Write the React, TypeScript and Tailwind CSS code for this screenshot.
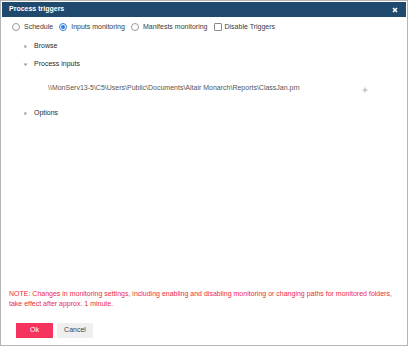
import React from 'react';

const Radio: React.FC<{ checked?: boolean; label: string }> = ({ checked, label }) => (
  <label className="flex items-center gap-[4px]">
    <span
      className={
        checked
          ? 'w-[8px] h-[8px] rounded-full border border-[#2d7fd8] bg-white flex items-center justify-center'
          : 'w-[8px] h-[8px] rounded-full border border-[#9a9a9a] bg-white'
      }
    >
      {checked && <span className="w-[4px] h-[4px] rounded-full bg-[#2d7fd8]" />}
    </span>
    <span className="text-[#3a3a3a]">{label}</span>
  </label>
);

const Caret: React.FC<{ open?: boolean }> = ({ open }) => (
  <svg width="5" height="5" viewBox="0 0 5 5" className="text-[#9a9a9a]">
    {open ? <path d="M0.5 1.5 L4.5 1.5 L2.5 4 Z" fill="currentColor" /> : <path d="M1.5 0.5 L4 2.5 L1.5 4.5 Z" fill="currentColor" />}
  </svg>
);

const Section: React.FC<{ title: string; open?: boolean }> = ({ title, open }) => (
  <div className="flex items-center h-[14px] pl-[21px] gap-[6px]">
    <Caret open={open} />
    <span className="text-[#2a2a2a] font-medium">{title}</span>
  </div>
);

const App: React.FC = () => {
  return (
    <div
      className="w-[408px] h-[346px] bg-white border border-[#b5b5b5] p-[1px] flex flex-col text-[7px] text-[#444]"
      style={{ fontFamily: '"Liberation Sans", Arial, sans-serif' }}
    >
      <div className="h-[15px] bg-[#1f4a6d] flex items-center justify-between pl-[7px] pr-[8px]">
        <span className="text-white font-bold">Process triggers</span>
        <svg width="6" height="6" viewBox="0 0 6 6">
          <path d="M1 1 L5 5 M5 1 L1 5" stroke="white" strokeWidth="1.6" />
        </svg>
      </div>

      <div className="flex items-center gap-[6px] pl-[10px] mt-[3px] h-[14px]">
        <Radio label="Schedule" />
        <Radio checked label="Inputs monitoring" />
        <Radio label="Manifests monitoring" />
        <label className="flex items-center gap-[3px]">
          <span className="w-[8px] h-[8px] rounded-[1px] border border-[#8a8a8a] bg-white" />
          <span className="text-[#3a3a3a]">Disable Triggers</span>
        </label>
      </div>

      <div className="mt-[5px]">
        <Section title="Browse" />
      </div>
      <div className="mt-[4px]">
        <Section title="Process inputs" open />
      </div>

      <div className="flex items-center justify-between h-[14px] mt-[10px] pl-[46px] pr-[38px]">
        <span className="text-[#555]">\\MonServ13-5\C5\Users\Public\Documents\Altair Monarch\Reports\ClassJan.prn</span>
        <svg width="6" height="6" viewBox="0 0 6 6" className="mt-[3px]">
          <path d="M3 0.5 V5.5 M0.5 3 H5.5" stroke="#a0a0a0" strokeWidth="0.8" />
        </svg>
      </div>

      <div className="mt-[11px]">
        <Section title="Options" />
      </div>

      <div className="flex-1" />

      <div className="px-[7px] text-[#ee2a3d] leading-[10px]">
        NOTE: Changes in monitoring settings, including enabling and disabling monitoring or changing paths for monitored folders,
        <br />
        take effect after approx. 1 minute.
      </div>

      <div className="flex gap-[4px] pl-[14px] mt-[14px] mb-[6px]">
        <button className="w-[37px] h-[15px] bg-[#f6335f] text-white">Ok</button>
        <button className="w-[36px] h-[15px] bg-[#efefef] text-[#444]">Cancel</button>
      </div>
    </div>
  );
};

export default App;
